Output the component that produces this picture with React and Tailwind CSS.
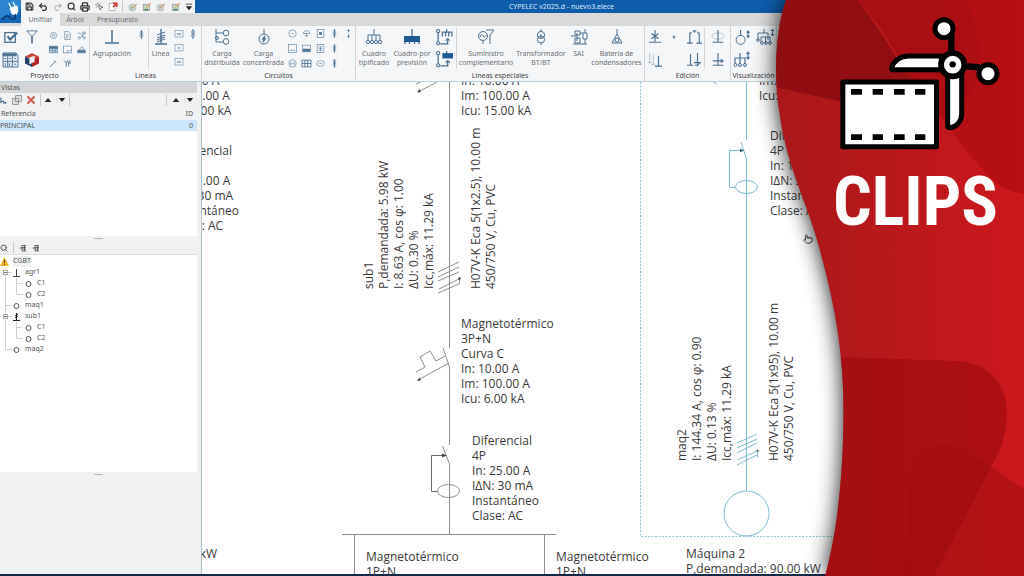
import { MousePointerClick, Pointer, Printer, Redo2, Save, Search, Undo2, X } from "lucide-react";

// Line icons used by the ribbon, all drawn on a 16x16 grid
const glyphs = {
  check: <><rect x="1" y="3" width="12" height="11" fill="#fff" strokeWidth="1.500" /><path d="M4 7l3 4 8-8" strokeWidth="2.500" /></>,
  funnel: <path d="M2 1h12L8.500 7v8h-1V7z" />,
  target: <><circle cx="8" cy="8" r="5.500" /><circle cx="8" cy="8" r="2" /></>,
  page: <><path d="M3 1h7l3 3v11H3z" /><path d="M5 6h5M5 9h5M5 12h4" /></>,
  nodes: <><path d="M1 4h5l6 8M6 12l7-8" /><circle cx="4" cy="12" r="2" /><circle cx="13" cy="12" r="2" /><path d="M10 2h5v3h-5z" /></>,
  table: <><rect x="1" y="2" width="14" height="12" fill="#c7d9e8" /><path d="M1 6h14M1 10h14M6 6v8M11 6v8" /><path d="M1 3h14v3H1z" fill="currentColor" /></>,
  screen: <><rect x="1" y="2" width="14" height="12" fill="#fff" /><path d="M8 14v-4h7" /></>,
  stamp: <><path d="M1 14V9h14v5zM4 9l4-6 4 3-2 3" /><path d="M2 10h12v3H2z" fill="currentColor" /></>,
  calc: <><path d="M0 1h14l2 3v12H0z" fill="#e6eef5" /><path d="M0 2h14v2H0z" fill="currentColor" /><path d="M0 10h16M5 4v12M10 4v12M1.500 7h2M6.500 7h2M12 7h2M12 13h2M2.500 12v3M7 12v3" /></>,
  cube: <><path d="M8 0l8 4-8 4-8-4z" fill="#c84b3a" stroke="none" /><path d="M0 4l8 4v8l-8-4z" fill="#263f66" stroke="none" /><path d="M16 4v8l-8 4V8z" fill="#b32627" stroke="none" /><path d="M5 5l6-2v7l-6 3z" fill="#eef1f4" stroke="none" /></>,
  wand: <path d="M2 14l9-9M9 3l4 3" strokeWidth="1.500" />,
  forks: <path d="M2 3l4 4v7M6 7l3-5M10 13V5l4-2M10 9l4-3" strokeWidth="1.500" />,
  tee: <path d="M8 1v12M1 14h14" strokeWidth="1.500" />,
  load: <><path d="M8 0v16" strokeWidth="1.500" /><circle cx="8" cy="5" r="2.500" /><circle cx="8" cy="10" r="2.500" /></>,
  line: <><path d="M8 0v14M2 15h12" strokeWidth="1.400" /><path d="M4 6l8-3M4 9l8-3M4 11l8-3M4 13l8-3" /></>,
  card: <><rect x="0" y="1" width="16" height="13" /><path d="M4 8h8" strokeWidth="2" /></>,
  cardPlus: <><rect x="0" y="1" width="16" height="13" /><path d="M5 8h6M8 5v6" /></>,
  spread: <><path d="M2 0v13h7M2 4h7" /><circle cx="12" cy="4" r="2.800" /><circle cx="12" cy="12.500" r="2.800" /><circle cx="3" cy="9" r="1.500" /></>,
  single: <><path d="M8 0v5" /><circle cx="8" cy="10" r="5" /><path d="M9 7l-2 3h2l-2 3" strokeWidth="1.500" /></>,
  ring: <><circle cx="8" cy="8" r="6.500" /><path d="M6 8h4" /></>,
  lamp: <><path d="M2 8a6 5 0 1112 0zM8 8v6" /><path d="M5 12h6" /></>,
  boxDot: <><rect x="2" y="1" width="12" height="14" /><rect x="6" y="6" width="4" height="4" fill="currentColor" /></>,
  heater: <><rect x="1" y="1" width="14" height="14" /><path d="M3 11h10" /></>,
  tray: <><rect x="1" y="2" width="14" height="12" /><path d="M2 9h12v4H2z" fill="currentColor" /></>,
  vent: <><rect x="2" y="1" width="12" height="14" /><path d="M5 5h6M5 8h6M5 11h6M8 5v8" /></>,
  motor: <><circle cx="8" cy="8" r="6.500" /><path d="M5 11V6l3 3 3-3v5" /></>,
  oval: <><ellipse cx="8" cy="8" rx="7" ry="5" /><path d="M5 8h6" /></>,
  grid: <><rect x="0" y="2" width="16" height="12" strokeWidth="1.500" /><path d="M0 8h16M5 2v12M10 2v12" strokeWidth="1.500" /></>,
  arrows: <path d="M8 1v5M6 3l2-2 2 2M8 9v6M6 13l2 2 2-2" strokeWidth="1.500" />,
  board: <><path d="M8 0v6M2 12V6h12v6M6 6v6M10 6v6" /><circle cx="2" cy="13" r="1.600" /><circle cx="6" cy="13" r="1.600" /><circle cx="10" cy="13" r="1.600" /><circle cx="14" cy="13" r="1.600" /></>,
  comb: <><path d="M8 0v7M1 15v-3M5.500 15v-3M10.500 15v-3M15 15v-3" strokeWidth="1.300" /><path d="M0 7h16v6H0z" fill="#1d5a94" stroke="none" /></>,
  swapBoard: <><path d="M2 3v9M10 0v3M6 7V3h9v4M9 3v4M12 3v4M4 14h7v-4" strokeWidth="1.200" /><circle cx="2" cy="2" r="1.500" /><circle cx="2" cy="13.500" r="1.500" /><path d="M9 11l2-2 2 2" /></>,
  swapComb: <><path d="M2 3v9M10 0v3M4 14h7v-4M9 11l2-2 2 2" strokeWidth="1.200" /><circle cx="2" cy="2" r="1.500" /><circle cx="2" cy="13.500" r="1.500" /><path d="M6 2h10v5H6z" fill="#1d5a94" stroke="none" /></>,
  supply: <><circle cx="5" cy="7" r="4.500" /><path d="M2 8c1-3 2-3 3-1s2 1 3-1M8 1h8l-4 5v9M5 11.500V15" /></>,
  trafo: <><circle cx="8" cy="6" r="3.600" /><circle cx="8" cy="10.500" r="3.600" /><path d="M8 0v2M8 14v2M8 5v4" /></>,
  ups: <><path d="M0 7h5M4 2h5v4H4zM4 9h5v5H4zM14 0v4M12 4h4v6h-4zM14 10v5M9 4h3M2 15h14M6 4v8" /></>,
  battery: <><path d="M8 0v5M8 5L3 14h10z" /><circle cx="8" cy="11" r="2" /></>,
  star: <path d="M8 0v13M1 14h14M4 4l8 6M12 4l-8 6" strokeWidth="1.300" />,
  move: <path d="M3 3v11M0 14h6M13 3v11M10 14h6M3 3h2M11 3h2M6 1h4M8 0v3" strokeWidth="1.200" />,
  copies: <><path d="M2 0v11M0 11h4M6 1v12M4 13h4" opacity="0.450" /><path d="M12 3v12M8 15h8" strokeWidth="1.400" /></>,
  insert: <path d="M4 1v13M0 14h7M12 0v11M8 11h8M9 14h3l2-2M12 12v3" strokeWidth="1.300" />,
  mirror: <><path d="M8 0v14M2 14h12" strokeWidth="1.300" /><ellipse cx="8" cy="7" rx="7" ry="3.500" strokeOpacity="0.400" /></>,
  split: <path d="M8 0v14M2 14h12M2 9h11M11 7l3 2-3 2" strokeWidth="1.300" />,
  sizeRing: <><circle cx="6" cy="10.500" r="4.800" /><path d="M6 0v6M14 1v7M12.500 3L14 1l1.500 2M12.500 6L14 8l1.500-2" strokeWidth="1.200" /></>,
  sizeTree: <><path d="M7 0v4M1 11V4h10v7M4 8v5M4 8h9v6M8.500 8v6M15.500 0v7M14 2l1.500-2L17 2M14 5l1.500 2L17 5" /><circle cx="1" cy="11" r="1.400" /><circle cx="5" cy="14" r="1.400" /><circle cx="9" cy="14" r="1.400" /><circle cx="13" cy="14" r="1.400" /></>,
  sizeBoard: <><path d="M6 1v5M1 12V6h10v6M6 6v6M14 0v7M12.500 2L14 0l1.500 2M12.500 5L14 7l1.500-2" strokeWidth="1.200" /><circle cx="1.500" cy="13" r="1.500" /><circle cx="6" cy="13" r="1.500" /><circle cx="11" cy="13" r="1.500" /></>,
  plus: <path d="M8 3v10M4 8h8M5 5l6 6" strokeWidth="2" />,
  edit: <><circle cx="7" cy="9" r="5.500" fill="#dbe5d6" stroke="#99a" /><path d="M6 9l8-6" stroke="#d9a566" strokeWidth="2" /><path d="M4 8h5M4 11h5" stroke="#5c9468" /></>,
  editBox: <><rect x="2" y="4" width="10" height="10" fill="#c6dac3" stroke="#889" /><path d="M6 9l8-7" stroke="#d9a566" strokeWidth="2" /><path d="M4 12h6" stroke="#3c7a4b" strokeWidth="2" /></>,
  exportPage: <><path d="M2 2h9v12H2z" stroke="#888" fill="#fff" /><path d="M8 8l5-5M8 2h6v6" stroke="#cf3b35" strokeWidth="2.500" /></>,
  outline: <path d="M1 8h5M6 2v12M6 3h8M6 7h8M6 10h8M6 14h8M11 2v12" stroke="#444" strokeWidth="1.500" />,
  addView: <path d="M2 1v13M2 10h6v5M8 13h7M12 11v5" strokeWidth="2.500" />,
};

function Glyph({ name, className = "size-[10px]" }) {
  return (
    <svg viewBox="0 0 16 16" fill="none" stroke="currentColor" className={`shrink-0 overflow-visible text-[#4a7092] ${className}`} aria-hidden="true">
      {glyphs[name]}
    </svg>
  );
}

function Tool({ name, label, className, boxClass = "h-[14px]" }) {
  return (
    <button type="button" aria-label={label || name} className={`flex items-center justify-center ${boxClass}`}>
      <Glyph name={name} className={className} />
    </button>
  );
}

function BigTool({ name, lines, width }) {
  return (
    <button type="button" className={`flex shrink-0 flex-col items-center pt-[3px] ${width}`}>
      <Glyph name={name} className="mb-[4px] size-[16px]" />
      {lines.map((line) => (
        <span key={line} className="leading-[9px] whitespace-nowrap">{line}</span>
      ))}
    </button>
  );
}

function Group({ title, width, children }) {
  return (
    <section className={`flex shrink-0 flex-col border-r border-[#d3d5d8] ${width}`}>
      <div className="flex h-[45px]">{children}</div>
      <h2 className="text-center leading-[9px] text-[#444]">{title}</h2>
    </section>
  );
}

function Ribbon() {
  return (
    <div className="flex h-[56px] border-b border-[#bcd0dc] bg-[#f5f6f7] text-[7px] text-[#6b6f75]">
      <Group title="Proyecto" width="w-[90px]">
        <div className="grid w-[42px] grid-cols-2 place-items-center">
          <Tool name="check" className="size-[14px]" />
          <Tool name="funnel" className="size-[14px]" />
          <Tool name="calc" className="size-[15px]" />
          <Tool name="cube" className="size-[14px]" />
        </div>
        <div className="grid flex-1 grid-cols-3 place-items-center py-[2px] pl-[4px]">
          {["target", "page", "nodes", "table", "screen", "stamp", "wand", "forks"].map((name) => (
            <Tool key={name} name={name} className="size-[9px]" />
          ))}
        </div>
      </Group>

      <Group title="Líneas" width="w-[112px]">
        <BigTool name="tee" lines={["Agrupación"]} width="w-[44px]" />
        <Tool name="load" className="size-[9px]" boxClass="h-[16px] w-[14px]" />
        <div className="my-[2px] border-l border-[#d3d5d8]" />
        <BigTool name="line" lines={["Línea"]} width="w-[23px]" />
        <div className="flex w-[14px] flex-col items-center py-[1px]">
          <Tool name="card" className="size-[8px]" />
          <Tool name="cardPlus" className="size-[8px]" />
          <Tool name="card" label="card small" className="size-[8px]" />
        </div>
        <Tool name="load" label="load right" className="size-[10px]" boxClass="h-[16px] w-[14px]" />
      </Group>

      <Group title="Circuitos" width="w-[154px]">
        <BigTool name="spread" lines={["Carga", "distribuida"]} width="w-[40px]" />
        <BigTool name="single" lines={["Carga", "concentrada"]} width="w-[43px]" />
        <div className="grid w-[70px] grid-cols-5 place-items-center">
          {["ring", "lamp", "boxDot", "load", "arrows", "heater", "tray", "vent", "load", "", "motor", "grid", "oval", "load"].map((name, i) =>
            name ? <Tool key={i} name={name} className="size-[9px]" /> : <span key={i} />
          )}
        </div>
      </Group>

      <Group title="Líneas especiales" width="w-[289px]">
        <BigTool name="board" lines={["Cuadro", "tipificado"]} width="w-[36px]" />
        <BigTool name="comb" lines={["Cuadro por", "previsión"]} width="w-[40px]" />
        <div className="flex w-[24px] flex-col items-center justify-around">
          <Tool name="swapBoard" className="size-[17px]" />
          <Tool name="swapComb" className="size-[17px]" />
        </div>
        <div className="my-[2px] border-l border-[#d3d5d8]" />
        <BigTool name="supply" lines={["Suministro", "complementario"]} width="w-[58px]" />
        <BigTool name="trafo" lines={["Transformador", "BT/BT"]} width="w-[52px]" />
        <BigTool name="ups" lines={["SAI"]} width="w-[23px]" />
        <BigTool name="battery" lines={["Batería de", "condensadores"]} width="w-[53px]" />
      </Group>

      <Group title="Edición" width="w-[86px]">
        <div className="grid w-[59px] grid-cols-3 place-items-center">
          <Tool name="star" className="size-[14px]" />
          <Tool name="plus" className="size-[6px]" />
          <Tool name="move" className="size-[15px]" />
          <Tool name="copies" className="size-[14px]" />
          <span />
          <Tool name="insert" className="size-[14px]" />
        </div>
        <div className="my-[2px] border-l border-[#d3d5d8]" />
        <div className="flex flex-1 flex-col items-center justify-around">
          <Tool name="mirror" className="size-[14px]" />
          <Tool name="split" className="size-[14px]" />
        </div>
      </Group>

      <Group title="Visualización" width="w-[46px]">
        <div className="grid flex-1 grid-cols-2 place-items-center">
          <Tool name="sizeRing" className="size-[15px]" />
          <Tool name="sizeTree" className="size-[16px]" />
          <Tool name="sizeBoard" className="size-[16px]" />
        </div>
      </Group>
    </div>
  );
}

function Header() {
  return (
    <header className="flex bg-[#d9d9d9]">
      <div className="flex h-[23px] w-[21px] shrink-0 items-center justify-center bg-[#1568b5]">
        <svg viewBox="0 0 21 23" className="h-[23px] w-[21px]" fill="none" stroke="#fff" aria-label="CYPELEC">
          <path d="M0 0h21v8L0 18z" fill="#2b86cf" stroke="none" />
          <path d="M10 8l7-2 1 5-2 4-4-1z" fill="#fff" />
          <path d="M11 8L9 3M15 6l-2-4" strokeWidth="1.300" />
          <path d="M15 14c1 3 0 6-3 5s-3-4-6-3-1 4-4 3" stroke="#0b2f5c" strokeWidth="1.300" />
        </svg>
      </div>
      <div className="flex min-w-0 flex-1 flex-col">
        <div className="flex h-[13px] bg-[#0f5cab]">
          <div className="flex w-[174px] items-center justify-between bg-[#f2f3f4] pr-[2px] pl-[4px] text-[#333]">
            <button type="button" aria-label="Guardar"><Save size={9} strokeWidth={3} /></button>
            <button type="button" aria-label="Deshacer"><Undo2 size={10} strokeWidth={3} /></button>
            <button type="button" aria-label="Rehacer"><Redo2 size={10} className="text-[#999]" /></button>
            <button type="button" aria-label="Buscar"><Search size={9} strokeWidth={3} /></button>
            <button type="button" aria-label="Imprimir"><Printer size={10} strokeWidth={3} /></button>
            <button type="button" aria-label="Vista previa"><MousePointerClick size={9} className="text-[#555]" /></button>
            <Tool name="exportPage" label="Exportar" />
            <div className="h-[11px] border-l border-[#c4c4c4]" />
            <Tool name="edit" label="Editar 1" />
            <Tool name="editBox" label="Editar 2" />
            <Tool name="edit" label="Editar 3" />
            <Tool name="editBox" label="Editar 4" />
            <button type="button" aria-label="Más">
              <svg viewBox="0 0 10 10" className="size-[8px]"><path d="M1 1h8v1H1zM1 4h8L5 9z" fill="#222" /></svg>
            </button>
          </div>
          <h1 className="flex-1 pr-[96px] text-center text-[7px] leading-[14px] text-[#dbe9f7]">CYPELEC v2025.d - nuevo3.elece</h1>
        </div>
        <nav className="flex h-[13px] text-[7px] leading-[13px] text-[#6b6f75]">
          <button type="button" className="w-[39px] bg-[#f5f6f7]">Unifilar</button>
          <button type="button" className="w-[30px]">Árbol</button>
          <button type="button" className="px-[7px]">Presupuesto</button>
        </nav>
      </div>
    </header>
  );
}

function TreeRow({ icon, label, level, fold }) {
  return (
    <li className="flex h-[11px] items-center">
      {level > 0 && (
        <svg width={level * 12} height="11" fill="none" stroke="#d0d0d0" className="shrink-0" aria-hidden="true">
          <path d={label === "maq2" ? "M5.500 0v5.500h6" : "M5.500 0v11"} />
          {level === 1 && <path d="M5.500 5.500h6" />}
          {level === 2 && <path d={label === "C2" ? "M16.500 0v5.500h6" : "M16.500 0v11M16.500 5.500h6"} />}
          {fold && <><rect x="3.500" y="3.500" width="4" height="4" fill="#fff" stroke="#aaa" /><path d="M4 5.500h3" stroke="#777" /></>}
        </svg>
      )}
      {icon === "warn" && (
        <svg viewBox="0 0 10 10" className="mr-[4px] size-[9px]"><path d="M5 0l5 10H0z" fill="#f0b323" /><path d="M5 3v4M5 8v1" stroke="#333" /></svg>
      )}
      {icon === "ring" && (
        <svg viewBox="0 0 9 9" className="mr-[4px] size-[9px]"><circle cx="4.500" cy="5" r="2.500" fill="none" stroke="#555" /></svg>
      )}
      {icon === "tee" && (
        <svg viewBox="0 0 9 9" className="mr-[4px] size-[9px]"><path d="M4.500 1v7M1 8.500h7" stroke="#444" /></svg>
      )}
      {icon === "sub" && (
        <svg viewBox="0 0 9 9" className="mr-[4px] size-[9px]"><path d="M4.500 1v7M1 8.500h7M3 4l3-2M3 6l3-2" stroke="#222" /></svg>
      )}
      {level === 0 ? <span className="bg-[#f0f0f0]">{label}</span> : label}
    </li>
  );
}

const tree = [
  { icon: "warn", label: "CGBT", level: 0 },
  { icon: "tee", label: "agr1", level: 1, fold: true },
  { icon: "ring", label: "C1", level: 2 },
  { icon: "ring", label: "C2", level: 2 },
  { icon: "ring", label: "maq1", level: 1 },
  { icon: "sub", label: "sub1", level: 1, fold: true },
  { icon: "ring", label: "C1", level: 2 },
  { icon: "ring", label: "C2", level: 2 },
  { icon: "ring", label: "maq2", level: 1 },
];

function Arrow({ down, label }) {
  return (
    <button type="button" aria-label={label} className="px-[3px]">
      <svg viewBox="0 0 8 5" className="h-[4px] w-[8px]"><path d={down ? "M0 0h8L4 5z" : "M0 5h8L4 0z"} fill="#222" /></svg>
    </button>
  );
}

function Sidebar() {
  return (
    <aside className="flex w-[202px] shrink-0 flex-col border-r border-[#aebfca] bg-[#f0f1f2] pr-[4px] text-[7px] text-[#555]">
      <h2 className="h-[11px] bg-[#d4d5d6] pl-px leading-[11px]">Vistas</h2>
      <div className="flex h-[14px] items-center">
        <Tool name="addView" label="Nueva vista" className="size-[7px]" />
        <button type="button" aria-label="Copiar" className="ml-[5px]">
          <svg viewBox="0 0 10 10" className="size-[10px]" fill="#ddd" stroke="#999"><path d="M3.500 .5h6v6h-6zM.5 3.500h6v6h-6z" /></svg>
        </button>
        <button type="button" aria-label="Borrar" className="ml-[3px]"><X size={12} strokeWidth={4} className="text-[#d9594f]" /></button>
        <div className="ml-[3px] h-[12px] border-l border-[#c8c8c8]" />
        <Arrow label="Subir" />
        <Arrow down label="Bajar" />
        <div className="h-[12px] border-l border-[#c8c8c8]" />
        <div className="ml-auto h-[12px] border-l border-[#c8c8c8] pr-[2px]" />
        <Arrow label="Anterior" />
        <Arrow down label="Siguiente" />
      </div>
      <div className="h-[129px] bg-white">
        <table className="w-full border-collapse">
          <thead>
            <tr className="h-[13px] bg-[#f0f1f2] leading-[12px]">
              <th className="pl-px text-left font-normal">Referencia</th>
              <th className="pr-[4px] text-right font-normal">ID</th>
            </tr>
          </thead>
          <tbody>
            <tr className="h-[11px] bg-[#cbe6fb] leading-[11px]">
              <td>PRINCIPAL</td>
              <td className="pr-[4px] text-right">0</td>
            </tr>
          </tbody>
        </table>
      </div>
      <div className="mx-auto mt-[2px] w-[9px] border-t border-[#b5b5b5]" />
      <div className="flex h-[16px] items-center gap-[5px] border-b border-[#dcdcdc] pt-[2px]">
        <button type="button" aria-label="Buscar en el árbol"><Search size={8} strokeWidth={3} /></button>
        <div className="h-[11px] border-l border-[#c8c8c8]" />
        <Tool name="outline" label="Expandir" className="size-[8px]" />
        <Tool name="outline" label="Contraer" className="size-[8px]" />
      </div>
      <ul className="h-[217px] bg-white pt-px text-[#555]">
        {tree.map((row, i) => <TreeRow key={i} {...row} />)}
      </ul>
      <div className="mx-auto mt-[2px] w-[9px] border-t border-[#b5b5b5]" />
    </aside>
  );
}

// Diagram labels; upright ones hang from x,y and vertical ones stand on it
const labels = [
  { x: -41, y: -9, lines: ["In: 10.00 A", "Im: 100.00 A", "Icu: 15.00 kA"] },
  { x: -30, y: 61, lines: ["Diferencial", "4P", "In: 25.00 A", "IΔN: 30 mA", "Instantáneo", "Clase: AC"] },
  { x: 259, y: -9, lines: ["In: 10.00 A", "Im: 100.00 A", "Icu: 15.00 kA"] },
  { x: 259, y: 234, lines: ["Magnetotérmico", "3P+N", "Curva C", "In: 10.00 A", "Im: 100.00 A", "Icu: 6.00 kA"] },
  { x: 270, y: 351, lines: ["Diferencial", "4P", "In: 25.00 A", "IΔN: 30 mA", "Instantáneo", "Clase: AC"] },
  { x: -113, y: 464, lines: ["P,demandada: 5.98 kW"] },
  { x: 164, y: 467, lines: ["Magnetotérmico", "1P+N"] },
  { x: 354, y: 467, lines: ["Magnetotérmico", "1P+N"] },
  { x: 484, y: 464, lines: ["Máquina 2", "P,demandada: 90.00 kW"] },
  { x: 557, y: -9, lines: ["Im: 100.00 A", "Icu: 15.00 kA"] },
  { x: 568, y: 46, lines: ["Diferencial", "4P", "In: 160.00 A", "IΔN: 30 mA", "Instantáneo", "Clase: AC"] },
];

const verticalLabels = [
  { x: 159, y: 207, lines: ["sub1", "P,demandada: 5.98 kW", "I: 8.63 A, cos φ: 1.00", "ΔU: 0.30 %", "Icc,máx: 11.29 kA"] },
  { x: 266, y: 207, lines: ["H07V-K Eca 5(1x2.5), 10.00 m", "450/750 V, Cu, PVC"] },
  { x: 472, y: 379, lines: ["maq2", "I: 144.34 A, cos φ: 0.90", "ΔU: 0.13 %", "Icc,máx: 11.29 kA"] },
  { x: 564, y: 379, lines: ["H07V-K Eca 5(1x95), 10.00 m", "450/750 V, Cu, PVC"] },
];

function Diagram() {
  return (
    <main className="relative min-w-0 flex-1 overflow-hidden bg-white font-['Open_Sans','Noto_Sans',sans-serif] text-[12px] leading-[15px] text-[#3a3a3a]">
      <svg viewBox="202 82 822 492" width="822" height="492" fill="none" className="absolute top-0 left-0" aria-hidden="true">
        <g stroke="#8f8f8f">
          <path d="M449.500 82v266M443 348l6.500 19v78M442.500 446l7 18v70M342 534.500h214M354.500 534v42M544.500 534v42" />
          <path d="M416 372l9-5-5-10 10-6 6 10 9-5M449 363l-31 17M437 82l-19 10M421 82l-5 2" />
          <path d="M438 272l21-10M438 277l21-10M438 281l21-9M439 289l20-10M438 293l21-9M459.500 278v6" />
          <ellipse cx="448.500" cy="491" rx="11" ry="6.500" />
          <path d="M437 491.500h-5.500v-36H446" stroke="#666" />
        </g>
        <g fill="#444">
          <path d="M447 455.500l-5-2v4zM417 381l2.500-3.500 1.500 3zM417 92.500l2.500-3.500 1.500 3z" />
          <circle cx="459.500" cy="278.500" r="1.200" />
          <circle cx="757.500" cy="451" r="1.200" />
        </g>
        <g stroke="#7cbbd0">
          <path d="M746.500 82v58M741 142l5.500 17v332M713 82l4 2" />
          <path d="M735 187.500h-5.500v-37H744" />
          <ellipse cx="746.500" cy="187" rx="11" ry="6.500" />
          <circle cx="746.500" cy="513.500" r="22.500" />
          <path d="M737 443l20-9M737 448l20-9M737 453l20-10M737 460l20-9M737 465l20-10M757.500 451v6" />
          <path d="M640.500 82v454.500H840" strokeDasharray="2 1.500" stroke="#92c3d3" />
        </g>
        <path d="M744 150.500l-4-2v4z" fill="#35647a" />
      </svg>
      {labels.map(({ x, y, lines }) => (
        <div key={`${x},${y}`} className="absolute whitespace-nowrap" style={{ left: x, top: y }}>
          {lines.map((line) => <p key={line}>{line}</p>)}
        </div>
      ))}
      {verticalLabels.map(({ x, y, lines }) => (
        <div
          key={`${x},${y}`}
          className="absolute -translate-y-full rotate-180 whitespace-nowrap [writing-mode:vertical-rl]"
          style={{ left: x, top: y }}
        >
          {lines.map((line) => <p key={line}>{line}</p>)}
        </div>
      ))}
      <Pointer size={10} className="absolute top-[152px] left-[601px] fill-white text-[#333]" />
    </main>
  );
}

function ClipsIcon() {
  return (
    <svg viewBox="120 48 480 400" className="h-[134px] w-[160px]" fill="#fff" stroke="#000" strokeWidth="15" strokeLinejoin="round" aria-hidden="true">
      <rect x="128.500" y="245" width="281" height="194" />
      <path
        d="M153 266h33v17h-33zM218 266h31v17h-31zM282 266h32v17h-32zM345 266h31v17h-31zM153 402h33v17h-33zM218 402h31v17h-31zM282 402h32v17h-32zM345 402h31v17h-31z"
        fill="#000"
        stroke="none"
      />
      <path d="M424 167H326c-26 0-46 16-51 36-1 4 1 5 5 5h144z" />
      <path d="M443 225v150c0 6 2 8 8 7 22-4 34-22 34-42V225z" />
      <path d="M454 100v60M490 197l50 4" fill="none" strokeWidth="19" />
      <circle cx="432" cy="85" r="27" />
      <circle cx="564" cy="220" r="27" />
      <circle cx="458" cy="193" r="35" strokeWidth="17" />
      <circle cx="458" cy="192" r="9.500" fill="#000" stroke="none" />
    </svg>
  );
}

function ClipsPanel() {
  const edge = "M786 0C775 30 774 80 779 110C786 165 806 200 817 240C834 300 843.500 350 843.500 410C843.500 470 838 530 825 576H1034V0Z";
  return (
    <aside className="absolute inset-y-0 right-0 flex w-[284px] flex-col items-start overflow-hidden">
      <svg viewBox="740 0 284 576" preserveAspectRatio="none" className="absolute inset-0 h-full w-full" aria-hidden="true">
        <defs>
          <linearGradient id="red" x1="0" x2="1">
            <stop offset="0" stopColor="#a5171a" />
            <stop offset="0.450" stopColor="#b5181b" />
            <stop offset="1" stopColor="#cd181d" />
          </linearGradient>
          <filter id="soft" x="-20%" y="-10%" width="140%" height="120%"><feGaussianBlur stdDeviation="11" /></filter>
          <clipPath id="panel"><path d={edge} /></clipPath>
        </defs>
        <path d={edge} filter="url(#soft)" opacity="0.900" />
        <g clipPath="url(#panel)">
          <path d="M740 0h284v576H740z" fill="url(#red)" />
          <path d="M770 86L838 101Q890 112 940 118L895 55Q872 18 857 0H770z" fill="#8b0d10" fillOpacity="0.850" />
          <path d="M857 0Q885 28 905 72Q923 95 942 118Q975 165 998 184Q1010 192 1024 194V0z" fill="#ae0c11" fillOpacity="0.750" />
          <path d="M857 0Q885 28 905 72L942 118Q975 100 978 70Q980 20 965 0z" fill="#8b0d10" fillOpacity="0.200" />
          <path d="M840 357L955 361C990 362 1007 385 1007 412C1007 435 1000 452 992 465L934 576H800z" fill="#9a0a0e" fillOpacity="0.600" />
          <path d="M903 576L911 475C913 450 932 444 948 445C965 447 980 460 992 467L1024 489V576z" fill="#a00b0f" fillOpacity="0.500" />
        </g>
      </svg>
      <div className="relative mt-[16px] ml-[100px]">
        <ClipsIcon />
      </div>
      <p className="relative mt-[14px] ml-[93px] font-['Roboto_Condensed','Liberation_Sans_Narrow',Roboto,sans-serif] text-[68px] leading-[76px] font-bold text-white">
        CLIPS
      </p>
    </aside>
  );
}

export default function App() {
  return (
    <div className="relative flex h-screen flex-col overflow-hidden bg-[#f0f1f2] font-['Noto_Sans','Open_Sans',sans-serif]">
      <Header />
      <Ribbon />
      <div className="flex min-h-0 flex-1">
        <Sidebar />
        <Diagram />
      </div>
      <div className="h-[2px] shrink-0 bg-[#14294a]" />
      <ClipsPanel />
    </div>
  );
}
